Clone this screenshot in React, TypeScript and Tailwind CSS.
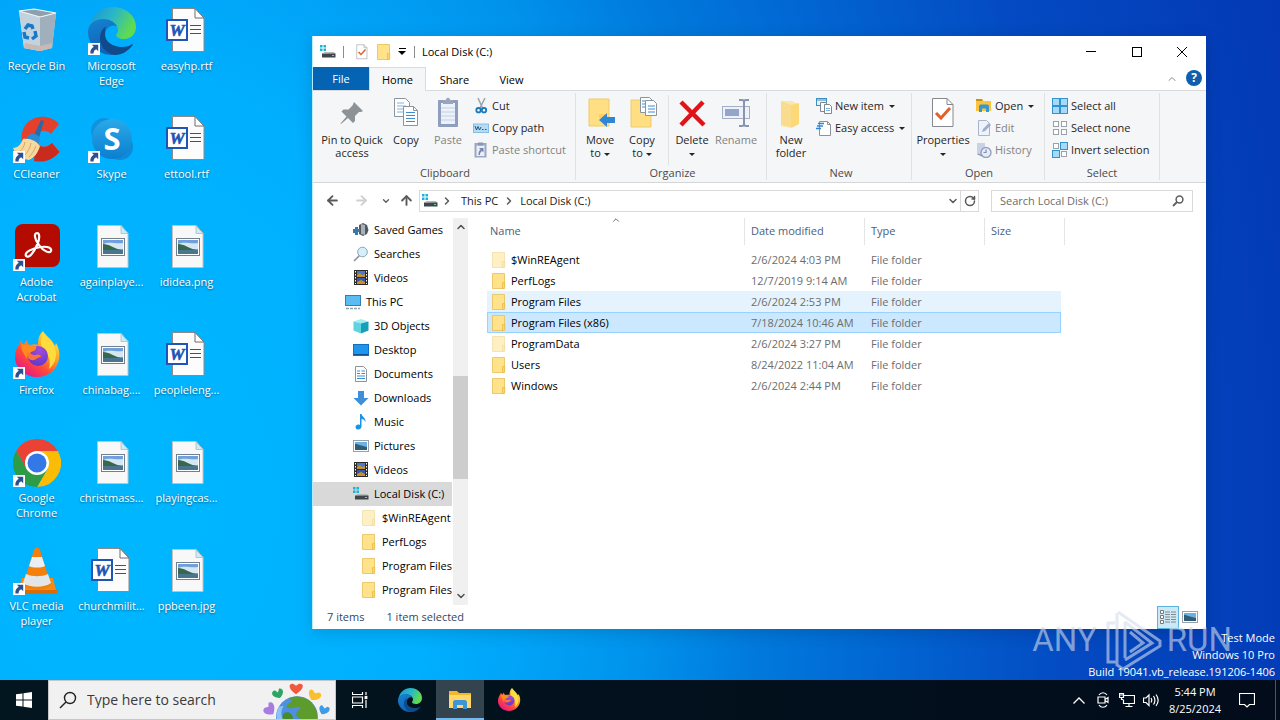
import React, { useState } from "react";
import clsx from "clsx";
import { ArrowLeft, ArrowRight, ArrowUp, ChevronDown, ChevronRight, ChevronUp, RotateCw } from "lucide-react";

type IconProps = { className?: string };

/* ---------- desktop icons ---------- */

const ShortcutArrow = () => (
  <svg viewBox="0 0 12 12" className="absolute bottom-0 left-0 size-3">
    <rect width="12" height="12" fill="#fff" />
    <path d="M3.800 1.800h6.400v6.400L8.200 6.200C6.400 7 5.600 8.200 5.600 10.600H2.400C2 7.400 3.400 5.400 5.800 3.800z" fill="#2d5090" />
  </svg>
);

const RecycleBinIcon = () => (
  <svg viewBox="0 0 48 48" className="size-12">
    <path d="M6 4 21 2 43 6 39 41 27 44 11 41z" fill="#d5dde3" />
    <path d="M6 4 27 10 27 44 11 41z" fill="#c3d3de" />
    <path d="M27 10 43 6 39 41 27 44z" fill="#9fb0bc" />
    <path d="M6 4 21 2 43 6 27 10z" fill="#8fa0ad" stroke="#f2f6f8" strokeWidth="1.200" />
    <path d="M11 41 12 36 27 39 39 36 39 41 27 44z" fill="#c9b8b4" />
    <g fill="none" stroke="#1878c9" strokeWidth="3.400">
      <path d="M12 22l3-4 4 1 1 3" />
      <path d="M22 24l1 5-4 3" />
      <path d="M16 31l-4-1-1-5" />
    </g>
  </svg>
);

const EdgeIcon = ({ className = "size-12" }: IconProps) => (
  <svg viewBox="0 0 48 48" className={className}>
    <defs>
      <linearGradient id="edgeTop" x1="0" y1="0" x2="1" y2="0.400">
        <stop offset="0" stopColor="#1794d8" />
        <stop offset="0.550" stopColor="#2cb8c4" />
        <stop offset="1" stopColor="#5fdb4f" />
      </linearGradient>
      <linearGradient id="edgeLeft" x1="0" y1="0" x2="0.300" y2="1">
        <stop offset="0" stopColor="#1583d1" />
        <stop offset="1" stopColor="#0f63b8" />
      </linearGradient>
    </defs>
    <path d="M1 22C3 8 13 0 25 0c13 0 23 9 23 20 0 7-5 12-12 12-5 0-8-2-8-4 0-1 2-2 2-5 0-5-5-10-13-10C9 13 3 17 1 22z" fill="url(#edgeTop)" />
    <path d="M0 25c0-8 7-13 15-13 7 0 11 3 14 7-6-2-12 2-12 10 0 9 7 15 14 18-3 1-5 1-7 1C10 48 0 37 0 25z" fill="url(#edgeLeft)" />
    <path d="M17 27c0 8 8 13 17 13 5 0 8-1 10-3 1 0 1 1 0 2-4 5-10 9-17 9-9-1-15-9-15-17 0-5 2-9 6-12-1 2-1 5-1 8z" fill="#114a8b" />
  </svg>
);

const WordFileIcon = () => (
  <svg viewBox="0 0 48 48" className="size-12">
    <path d="M9.500 1.500H32l9 9V44.500H9.500z" fill="#fcfcfc" stroke="#8a8a8a" />
    <path d="M32 1.500V11h9z" fill="#fff" stroke="#6d6d6d" />
    <path d="M27 18.500h11M27 22.500h11M27 26.500h11" stroke="#2b579a" strokeWidth="1.200" />
    <rect x="4" y="13" width="20" height="20" fill="#fff" stroke="#1f55b5" strokeWidth="2" />
    <text x="14" y="29" textAnchor="middle" fontFamily="Liberation Serif, serif" fontStyle="italic" fontWeight="700" fontSize="17" fill="#1f55b5" stroke="#1f55b5" strokeWidth="0.600">
      W
    </text>
  </svg>
);

const PictureFileIcon = () => (
  <svg viewBox="0 0 48 48" className="size-12">
    <path d="M9.500 2.500H33l7 8V44.500H9.500z" fill="#f8f8f8" stroke="#c2c2c2" />
    <path d="M33 2.500V10.500h7z" fill="#c9ecfb" stroke="#b7b7b7" strokeWidth="0.800" />
    <rect x="13.500" y="15.500" width="23" height="17" fill="#fff" stroke="#70808f" />
    <rect x="15" y="17" width="20" height="14" fill="#6f9fdc" />
    <path d="M15 21c6-3 12 0 20-1v6H15z" fill="#d5e7f0" />
    <path d="M15 21c6 0 10 4 18 6H15z" fill="#37684c" />
    <path d="M15 27h20v4H15z" fill="#4a7590" />
  </svg>
);

const CCleanerIcon = () => (
  <svg viewBox="0 0 48 48" className="size-12">
    <path d="M46 9C35-3 13 0 9 18c-3 15 8 27 20 27 7 0 13-3 18-8l-8-9c-6 6-15 4-16-3-1-8 8-13 15-6z" fill="#e5402c" />
    <path d="M46 37l-7-9c-6 6-12 5-15 0l-3 18c10 2 19-1 25-9z" fill="#c92c1f" />
    <path d="M28 5l3 1-6 20-6-2z" fill="#2a6aa8" />
    <path d="M14 22c3-5 10-4 13 1l-1 6-13-3z" fill="#2c8bd3" />
    <path d="M10 24c8-1 13 2 17 7-2 7-6 12-11 14C9 44 3 40 0 33c5 0 8-4 10-9z" fill="#f6d9a0" />
    <path d="M12 27c-1 5-3 8-6 10M18 28c-1 6-4 10-7 13M23 31c-2 5-4 8-7 11" stroke="#d9a85f" fill="none" />
  </svg>
);

const SkypeIcon = () => (
  <svg viewBox="0 0 48 48" className="size-12">
    <defs>
      <linearGradient id="skype" x1="0" y1="0" x2="0" y2="1">
        <stop offset="0" stopColor="#2aa9e8" />
        <stop offset="1" stopColor="#0a7fd0" />
      </linearGradient>
    </defs>
    <circle cx="16" cy="16" r="13" fill="#0f93dc" />
    <circle cx="32" cy="32" r="13" fill="#0e8ad6" />
    <circle cx="24" cy="24" r="20" fill="url(#skype)" />
    <text x="24" y="35" textAnchor="middle" fontFamily="Open Sans, sans-serif" fontWeight="700" fontSize="31" fill="#fff">
      S
    </text>
  </svg>
);

const AcrobatIcon = () => (
  <svg viewBox="0 0 48 48" className="size-12">
    <rect x="2" y="1" width="45" height="43" rx="8" fill="#b30b00" />
    <path
      d="M13 33c-2-4 7-8 15-9 7-1 11 1 10 4-1 3-8 0-12-6-5-6-5-12-2-12s3 6 0 12c-3 7-8 14-11 11z"
      fill="none"
      stroke="#fff"
      strokeWidth="2.200"
    />
  </svg>
);

const FirefoxIcon = ({ className = "size-12" }: IconProps) => (
  <svg viewBox="0 0 48 48" className={className}>
    <defs>
      <linearGradient id="foxBody" x1="0.850" y1="0.100" x2="0.200" y2="0.950">
        <stop offset="0" stopColor="#ffe545" />
        <stop offset="0.350" stopColor="#ff9d27" />
        <stop offset="0.650" stopColor="#ff4b37" />
        <stop offset="1" stopColor="#e6158c" />
      </linearGradient>
      <radialGradient id="foxCore" cx="0.600" cy="0.200" r="0.900">
        <stop offset="0" stopColor="#a04be0" />
        <stop offset="1" stopColor="#5a36c8" />
      </radialGradient>
    </defs>
    <path d="M30 0c2 4 9 8 12 15l1-3c3 5 4 10 3 16-2 11-11 18-22 18S2 38 2 26c0-6 2-10 5-14l1-3 2 5 4-5c0 3 1 4 3 5 3-1 6-1 8 0 0-6 1-10 5-14z" fill="url(#foxBody)" />
    <path d="M30 1c2 5 9 8 12 16 3 9-1 17-6 21 2-8 0-14-5-18-4-3-4-12-1-19z" fill="#ffdc3e" />
    <circle cx="25" cy="25" r="10" fill="url(#foxCore)" />
    <path d="M8 13l6 1c3 2 5 2 9 1 1 3-1 5-5 6-1 2-4 2-4 7-3-5-6-9-6-15z" fill="#ff8a1e" />
    <path d="M14 22c4-1 5 3 9 2 3-1 5 0 5 2-4 0-5 4-10 3-3-1-4-4-4-7z" fill="#ff7139" />
  </svg>
);

const ChromeIcon = () => (
  <svg viewBox="0 0 48 48" className="size-12">
    <path d="M3.200 12A24 24 0 0 1 44.800 12H24L13.600 30z" fill="#ea4335" />
    <path d="M44.800 12A24 24 0 0 1 24 48L34.400 30 24 12z" fill="#fbbc05" />
    <path d="M3.200 12A24 24 0 0 0 24 48L34.400 30 H13.600z" fill="#2c9c46" />
    <circle cx="24" cy="24" r="12" fill="#fff" />
    <circle cx="24" cy="24" r="9.500" fill="#3478e8" />
  </svg>
);

const VlcIcon = () => (
  <svg viewBox="0 0 48 48" className="size-12">
    <path d="M9 31h31l4 16H4z" fill="#f58a14" />
    <path d="M4 43h40v4H4z" fill="#d96c05" />
    <path d="M21 3c1-3 5-3 6 0l11 35c-4 6-24 6-28 0z" fill="#f57f0c" />
    <path d="M19 10h10l3 9c-4 2-12 2-16 0z" fill="#eceff1" />
    <path d="M13 27c7 3 15 3 22 0l3 9c-7 5-21 5-28 0z" fill="#e3e6e9" />
  </svg>
);

/* ---------- small icons ---------- */

const FolderIcon = ({ className = "size-4" }: IconProps) => (
  <svg viewBox="0 0 16 16" className={className}>
    <path d="M1.500 0.500h12v13l-1 2h-11z" fill="#ffe28a" stroke="#e6bf55" strokeWidth="0.800" />
    <path d="M11.500 9.500h2.200v6H11.500z" fill="#ffd663" stroke="#e0b23f" strokeWidth="0.600" />
  </svg>
);

const DriveIcon = () => (
  <svg viewBox="0 0 16 16" className="size-4 shrink-0">
    <path d="M0 1h2.500v2.500H0zM3.500 1H6v2.500H3.500zM0 4.500h2.500V7H0zM3.500 4.500H6V7H3.500z" fill="#17b5d8" />
    <path d="M3 9l1.500-1H14l1.500 2z" fill="#b7bbbe" />
    <rect x="2" y="9.500" width="13.500" height="4" fill="#3f454a" />
    <rect x="12" y="11" width="2" height="1" fill="#5ee06a" />
  </svg>
);

const CheckPageIcon = ({ className = "size-4" }: IconProps) => (
  <svg viewBox="0 0 32 32" className={className}>
    <path d="M5.500 1.500H20l6 6V29.500H5.500z" fill="#fff" stroke="#85888c" />
    <path d="M20 1.500v6h6" fill="none" stroke="#85888c" />
    <path d="M9 16l5 5 9-10" fill="none" stroke="#e0622a" strokeWidth="3" />
  </svg>
);

const PinIcon = () => (
  <svg viewBox="0 0 32 32" className="size-8">
    <path d="M18 5l9 9-2 1-2 0-4 4 0 5-2 2-5-5-7 6-0.500-0.500 6-7-5-5 2-2 5 0 4-4z" fill="#8d9296" />
  </svg>
);

const CopyIcon = () => (
  <svg viewBox="0 0 32 32" className="size-8">
    <path d="M4.500 1.500h11l4 4v14h-15z" fill="#fff" stroke="#8c939a" />
    <path d="M7 6h7M7 9h9M7 12h9M7 15h9" stroke="#7eb2e2" />
    <path d="M13.500 9.500h10l4 4v15h-14z" fill="#fff" stroke="#8c939a" />
    <path d="M23.500 9.500v4h4" fill="none" stroke="#8c939a" />
    <path d="M16 15.500h9M16 18.500h9M16 21.500h9M16 24.500h9" stroke="#3d8bd4" />
  </svg>
);

const PasteIcon = () => (
  <svg viewBox="0 0 32 32" className="size-8">
    <rect x="6" y="3" width="20" height="27" rx="1" fill="#8f9dbf" />
    <rect x="9" y="6" width="14" height="21" fill="#edf2fa" />
    <path d="M9 11h14M9 15h14M9 19h14M9 23h14" stroke="#c3cfe5" />
    <path d="M11 3h3c0-3 4-3 4 0h3v4H11z" fill="#9aa5bb" />
  </svg>
);

const CutIcon = () => (
  <svg viewBox="0 0 16 16" className="size-4">
    <path d="M5 0l4.500 10M12 0L7 10" stroke="#9aa4ae" strokeWidth="1.500" />
    <circle cx="5.500" cy="12.200" r="2.200" fill="none" stroke="#1a78b8" strokeWidth="1.800" />
    <circle cx="11" cy="12.200" r="2.200" fill="none" stroke="#1a78b8" strokeWidth="1.800" />
  </svg>
);

const CopyPathIcon = () => (
  <svg viewBox="0 0 16 16" className="size-4">
    <rect x="0.500" y="4" width="15" height="8.500" fill="#b5dbf5" stroke="#87bde3" />
    <path d="M2 6l1.500 4L5 6.500 6.500 10 8 7M9 9.500h1.500M12 9.500h1.500" fill="none" stroke="#24567c" />
  </svg>
);

const PasteShortcutIcon = () => (
  <svg viewBox="0 0 16 16" className="size-4">
    <rect x="1.500" y="1" width="12" height="14.500" fill="#9ba8c4" />
    <rect x="3.500" y="3.500" width="8" height="10.500" fill="#e9eef7" />
    <path d="M5 0.500h5v3H5z" fill="#8997b4" />
    <path d="M6 6h4.500v4.500L9 9c-1.500 1-2 2-2 4H5.500c0-3 0.500-4 2-5.500z" fill="#7787ad" />
  </svg>
);

const MoveToIcon = () => (
  <svg viewBox="0 0 32 32" className="size-8">
    <path d="M5 2h20v27H5z" fill="#ffdf82" stroke="#eccb6c" />
    <path d="M21 17v4h-6V17z" fill="#ffd15c" />
    <path d="M15 23l8-7v4h8v6h-8v4z" fill="#2f86d6" />
  </svg>
);

const CopyToIcon = () => (
  <svg viewBox="0 0 32 32" className="size-8">
    <path d="M5 3h20v27H5z" fill="#ffdf82" stroke="#eccb6c" />
    <path d="M14.500 0.500h9l3 3v12h-12z" fill="#fff" stroke="#8c939a" />
    <path d="M19.500 3.500h8l3 3v12h-11z" fill="#fff" stroke="#8c939a" />
    <path d="M16 4h3M16 7h3M16 10h3M22 9h7M22 12h7M22 15h7" stroke="#3d8bd4" />
  </svg>
);

const DeleteIcon = () => (
  <svg viewBox="0 0 32 32" className="size-8">
    <path d="M5 5l23 23M27 5L5 28" stroke="#e01317" strokeWidth="4.500" />
  </svg>
);

const RenameIcon = () => (
  <svg viewBox="0 0 32 32" className="size-8">
    <rect x="2.500" y="9.500" width="27" height="12" fill="#eef2f8" stroke="#a5b0c6" />
    <rect x="5" y="12" width="14" height="7" fill="#93a5ca" />
    <path d="M19 3h3c1 0 2 1 2 2v22c0 1-1 2-2 2h-3M29 3h-3c-1 0-2 1-2 2v22c0 1 1 2 2 2h3" fill="none" stroke="#8795b2" strokeWidth="2" />
  </svg>
);

const NewFolderIcon = () => (
  <svg viewBox="0 0 32 32" className="size-8">
    <path d="M6 4h11l7 3v20l-8 4-10-2z" fill="#fbe7ac" />
    <path d="M6 4l10 4v22L6 28z" fill="#f9dc8d" />
    <path d="M16 8l8-2v21l-8 4z" fill="#fdd877" />
  </svg>
);

const NewItemIcon = () => (
  <svg viewBox="0 0 16 16" className="size-4">
    <rect x="0.500" y="0.500" width="10" height="7" fill="#e3f1fb" stroke="#3e8fbd" />
    <path d="M1 2h9" stroke="#3e8fbd" />
    <path d="M4.500 4.500h6v9h-6z" fill="#fff" stroke="#7c8791" />
    <path d="M8.500 6.500h5l2 2v7h-7z" fill="#fff" stroke="#7c8791" />
    <path d="M10 10.500h4M10 12.500h4" stroke="#7eb2e2" />
  </svg>
);

const EasyAccessIcon = () => (
  <svg viewBox="0 0 16 16" className="size-4">
    <path d="M3.500 1.500h8l3 3v11h-11z" fill="#fff" stroke="#8c939a" />
    <path d="M11.500 1.500v3h3" fill="none" stroke="#8c939a" />
    <path d="M2 3.500h6M1 6h6M0 8.500h5" stroke="#2f86d6" strokeWidth="1.400" />
  </svg>
);

const OpenIcon = () => (
  <svg viewBox="0 0 16 16" className="size-4">
    <path d="M0 1h6l1 2h8v10H0z" fill="#fcc23b" />
    <path d="M0 1h6l1 2H0z" fill="#c9920f" />
    <path d="M3 14V8.500C3 7 4 6.500 5 6.500h6c1 0 2 0.500 2 2V14h-3v-3.500H6V14z" fill="#3597d4" />
  </svg>
);

const EditIcon = () => (
  <svg viewBox="0 0 16 16" className="size-4">
    <path d="M2.500 0.500h8l3 3v12h-11z" fill="#eef2f9" stroke="#a9b5cf" />
    <path d="M6 12l1-3 6-6 2 2-6 6z" fill="#9fadcc" />
  </svg>
);

const HistoryIcon = () => (
  <svg viewBox="0 0 16 16" className="size-4">
    <path d="M1 1h8v12H1z" fill="#c9d2e6" />
    <circle cx="10" cy="10.500" r="5" fill="#e6ebf5" stroke="#93a3c4" strokeWidth="1.400" />
    <path d="M10 7.500v3H7.500M2 12l4 2" fill="none" stroke="#7f90b5" strokeWidth="1.200" />
  </svg>
);

const SelectIcon = ({ filled }: { filled: boolean[] }) => (
  <svg viewBox="0 0 16 16" className="size-4">
    {filled.map((on, i) => {
      const x = (i % 2) * 8;
      const y = Math.floor(i / 2) * 8;
      return on ? (
        <rect key={i} x={x + 0.5} y={y + 0.5} width="7" height="7" fill="#a6daf8" stroke="#2f93cf" />
      ) : (
        <rect key={i} x={x + 1.5} y={y + 1.5} width="5" height="5" fill="#fff" stroke="#9aa1a8" />
      );
    })}
  </svg>
);

const SavedGamesIcon = () => (
  <svg viewBox="0 0 16 16" className="size-4">
    <path d="M6 3l4-2 4 2 1.500 5L14 12l-4 2-4-2z" fill="#505860" />
    <path d="M8 2l4 1v10l-4-1z" fill="#a9b1b8" />
    <path d="M0 7h2V5h3v2h2v3H5v3H2v-2H0z" fill="#3d78a8" />
  </svg>
);

const SearchesIcon = () => (
  <svg viewBox="0 0 16 16" className="size-4">
    <path d="M6.500 9.500L1 15" stroke="#8a8f95" strokeWidth="1.600" />
    <circle cx="9.500" cy="6" r="4.800" fill="#d7effb" stroke="#8aa5b5" />
  </svg>
);

const VideosIcon = () => (
  <svg viewBox="0 0 16 16" className="size-4">
    <rect x="1" y="0" width="14" height="15" fill="#2b2b2b" />
    <path d="M2.500 1v13M13.500 1v13" stroke="#fff" strokeDasharray="1.500 1.500" />
    <rect x="4" y="1" width="8" height="6" fill="#4d77c9" />
    <rect x="4" y="8" width="8" height="6" fill="#3458b0" />
    <path d="M4 5l3-2 2 2 3-1v3H4zM4 12l4-2 4 2v2H4z" fill="#c9912b" />
  </svg>
);

const ThisPcIcon = () => (
  <svg viewBox="0 0 16 16" className="size-4">
    <rect x="0.500" y="1.500" width="15" height="10" fill="#5bbcf2" stroke="#2e7fb5" />
    <path d="M1 14.500h14" stroke="#8fa3b2" strokeWidth="1.500" strokeDasharray="3 1" />
  </svg>
);

const ObjectsIcon = () => (
  <svg viewBox="0 0 16 16" className="size-4">
    <path d="M0.500 3.500L8 1l7.500 2.500L8 6z" fill="#a5ecf2" />
    <path d="M8 5.500l7.500-2v9L8 15.500z" fill="#16a0b5" />
    <path d="M0.500 3.500l7.500 2v10l-7.500-3z" fill="#5fd3df" />
  </svg>
);

const DesktopIcon = () => (
  <svg viewBox="0 0 16 16" className="size-4">
    <rect x="0.500" y="2.500" width="15" height="11" fill="#1e96ee" stroke="#1270bd" />
    <path d="M1 12.500h14" stroke="#0b548f" />
  </svg>
);

const DocumentsIcon = () => (
  <svg viewBox="0 0 16 16" className="size-4">
    <path d="M2.500 0.500h8l3 3v12h-11z" fill="#fff" stroke="#8c939a" />
    <path d="M4 5h3M8.500 5H12M4 7.500h3M8.500 7.500H12M4 10h8M4 12.500h8" stroke="#3d8bd4" />
  </svg>
);

const DownloadsIcon = () => (
  <svg viewBox="0 0 16 16" className="size-4">
    <path d="M5 1h6v7h4.500L8 15.500 0.500 8H5z" fill="#3e8fdb" />
  </svg>
);

const MusicIcon = () => (
  <svg viewBox="0 0 16 16" className="size-4">
    <path d="M7 0h1.500c0.500 3 4.500 3.500 4 8-1-2-2-3-4-3v7.500c0 4-6 4-6 0.500 0-2 2.500-3 4.500-2z" fill="#1c93ea" />
  </svg>
);

const PicturesIcon = () => (
  <svg viewBox="0 0 16 16" className="size-4 shrink-0">
    <rect x="0.500" y="2.500" width="15" height="11" fill="#fff" stroke="#97a1ab" />
    <rect x="2" y="4" width="12" height="8" fill="#6cb1e6" />
    <path d="M2 6c3 0 6 2 12 3v3H2z" fill="#2f5d74" />
  </svg>
);

/* ---------- desktop ---------- */

const desktopItems = [
  { label: "Recycle Bin", icon: <RecycleBinIcon /> },
  { label: "Microsoft Edge", icon: <EdgeIcon />, shortcut: true },
  { label: "easyhp.rtf", icon: <WordFileIcon /> },
  { label: "CCleaner", icon: <CCleanerIcon />, shortcut: true },
  { label: "Skype", icon: <SkypeIcon />, shortcut: true },
  { label: "ettool.rtf", icon: <WordFileIcon /> },
  { label: "Adobe Acrobat", icon: <AcrobatIcon />, shortcut: true },
  { label: "againplaye...", icon: <PictureFileIcon /> },
  { label: "ididea.png", icon: <PictureFileIcon /> },
  { label: "Firefox", icon: <FirefoxIcon />, shortcut: true },
  { label: "chinabag....", icon: <PictureFileIcon /> },
  { label: "peopleleng...", icon: <WordFileIcon /> },
  { label: "Google Chrome", icon: <ChromeIcon />, shortcut: true },
  { label: "christmass...", icon: <PictureFileIcon /> },
  { label: "playingcas...", icon: <PictureFileIcon /> },
  { label: "VLC media player", icon: <VlcIcon />, shortcut: true },
  { label: "churchmilit...", icon: <WordFileIcon /> },
  { label: "ppbeen.jpg", icon: <PictureFileIcon /> },
];

const DesktopIcons = () => (
  <div className="grid w-[225px] grid-cols-3">
    {desktopItems.map((item) => (
      <button key={item.label} className="flex h-[108px] flex-col items-center pt-[7px] pr-1.5 pl-1">
        <span className="relative">
          {item.icon}
          {item.shortcut && <ShortcutArrow />}
        </span>
        <span className="mt-[3px] leading-[15px] text-white [text-shadow:0_1px_2px_rgba(0,0,0,0.5)]">{item.label}</span>
      </button>
    ))}
  </div>
);

/* ---------- ribbon ---------- */

const Caret = () => <span className="inline-block border-x-[3px] border-t-[3px] border-x-transparent border-t-current align-middle" />;

type BigButtonProps = {
  icon: React.ReactNode;
  lines: React.ReactNode[];
  width: string;
  disabled?: boolean;
};

const BigButton = ({ icon, lines, width, disabled }: BigButtonProps) => (
  <button disabled={disabled} className={clsx("flex shrink-0 flex-col items-center pt-0.5 whitespace-nowrap", width, disabled && "text-[#838383]")}>
    {icon}
    {lines.map((line, i) => (
      <span key={i} className={clsx("leading-[13px]", i === 0 && "mt-1")}>
        {line}
      </span>
    ))}
  </button>
);

type SmallButtonProps = {
  icon: React.ReactNode;
  label: string;
  caret?: boolean;
  disabled?: boolean;
};

const SmallButton = ({ icon, label, caret, disabled }: SmallButtonProps) => (
  <button disabled={disabled} className={clsx("flex h-[22px] items-center gap-[3px] whitespace-nowrap", disabled && "text-[#838383]")}>
    {icon}
    {label}
    {caret && (
      <span className="flex pl-0.5">
        <Caret />
      </span>
    )}
  </button>
);

const RibbonGroup = ({ title, width, children }: { title: string; width: string; children: React.ReactNode }) => (
  <section className={clsx("flex shrink-0 flex-col border-r border-[#e0e1e2]", width)}>
    <div className="flex flex-1 pt-0.5">{children}</div>
    <h2 className="h-[15px] text-center leading-[15px] text-[#4a4a4a]">{title}</h2>
  </section>
);

const Ribbon = () => (
  <div className="flex h-[92px] shrink-0 overflow-hidden border-b border-[#d5d6d8] bg-[#f5f6f7] py-0.5 text-[#262626]">
    <RibbonGroup title="Clipboard" width="w-[263px] pl-0.5">
      <BigButton icon={<PinIcon />} lines={["Pin to Quick", "access"]} width="w-[74px]" />
      <BigButton icon={<CopyIcon />} lines={["Copy"]} width="w-[34px]" />
      <BigButton icon={<PasteIcon />} lines={["Paste"]} width="w-[50px]" disabled />
      <div>
        <SmallButton icon={<CutIcon />} label="Cut" />
        <SmallButton icon={<CopyPathIcon />} label="Copy path" />
        <SmallButton icon={<PasteShortcutIcon />} label="Paste shortcut" disabled />
      </div>
    </RibbonGroup>
    <RibbonGroup title="Organize" width="w-[191px] pl-[3px]">
      <BigButton icon={<MoveToIcon />} lines={["Move", <>to <Caret /></>]} width="w-[42px]" />
      <BigButton icon={<CopyToIcon />} lines={["Copy", <>to <Caret /></>]} width="w-[42px]" />
      <div className="mx-[5px] w-px bg-[#e0e1e2]" />
      <BigButton icon={<DeleteIcon />} lines={["Delete", <Caret />]} width="w-9" />
      <BigButton icon={<RenameIcon />} lines={["Rename"]} width="w-[52px]" disabled />
    </RibbonGroup>
    <RibbonGroup title="New" width="w-[145px] pl-1">
      <BigButton icon={<NewFolderIcon />} lines={["New", "folder"]} width="w-10" />
      <div className="pl-[5px]">
        <SmallButton icon={<NewItemIcon />} label="New item" caret />
        <SmallButton icon={<EasyAccessIcon />} label="Easy access" caret />
      </div>
    </RibbonGroup>
    <RibbonGroup title="Open" width="w-[133px] pl-0.5">
      <BigButton icon={<CheckPageIcon className="size-8" />} lines={["Properties", <Caret />]} width="w-[58px]" />
      <div className="pl-1">
        <SmallButton icon={<OpenIcon />} label="Open" caret />
        <SmallButton icon={<EditIcon />} label="Edit" disabled />
        <SmallButton icon={<HistoryIcon />} label="History" disabled />
      </div>
    </RibbonGroup>
    <RibbonGroup title="Select" width="w-[115px]">
      <div className="pl-[7px]">
        <SmallButton icon={<SelectIcon filled={[true, true, true, true]} />} label="Select all" />
        <SmallButton icon={<SelectIcon filled={[false, false, false, false]} />} label="Select none" />
        <SmallButton icon={<SelectIcon filled={[false, true, true, false]} />} label="Invert selection" />
      </div>
    </RibbonGroup>
  </div>
);

/* ---------- explorer window ---------- */

const TitleBar = () => (
  <header className="flex h-[31px] shrink-0 items-center pr-px">
    <div className="flex items-center pr-[7px] pl-[7px]">
      <DriveIcon />
    </div>
    <div className="h-3 w-px bg-[#8c8c8c]" />
    <button aria-label="Properties" className="ml-2.5">
      <CheckPageIcon />
    </button>
    <button aria-label="New folder" className="ml-1.5">
      <FolderIcon />
    </button>
    <button aria-label="Customize Quick Access Toolbar" className="ml-1.5 flex flex-col items-center gap-0.5">
      <span className="h-px w-[7px] bg-black" />
      <span className="border-x-[4px] border-t-[4px] border-x-transparent border-t-black" />
    </button>
    <div className="ml-2 h-3 w-px bg-[#8c8c8c]" />
    <h1 className="ml-[7px] flex-1">Local Disk (C:)</h1>
    <button aria-label="Minimize" className="flex h-full w-[46px] items-center justify-center">
      <span className="h-px w-2.5 bg-black" />
    </button>
    <button aria-label="Maximize" className="flex h-full w-[45px] items-center justify-center">
      <span className="size-2.5 border border-black" />
    </button>
    <button aria-label="Close" className="flex h-full w-[46px] items-center justify-center">
      <svg viewBox="0 0 10 10" className="size-2.5">
        <path d="M0 0l10 10M10 0L0 10" stroke="#000" />
      </svg>
    </button>
  </header>
);

const TabBar = () => {
  const [tab, setTab] = useState("Home");
  return (
    <nav className="flex h-6 shrink-0 border-b border-[#dadbdc]">
      <button className="w-14 bg-[#0463b2] text-white">File</button>
      {["Home", "Share", "View"].map((name) => (
        <button
          key={name}
          onClick={() => setTab(name)}
          className={clsx("-mb-px w-[57px] border border-b-0", tab === name ? "border-[#dadbdc] bg-[#f5f6f7]" : "border-transparent")}
        >
          {name}
        </button>
      ))}
      <div className="flex-1" />
      <button aria-label="Minimize the Ribbon" className="px-2 text-[#8a8a8a]">
        <ChevronUp className="size-3" />
      </button>
      <button aria-label="Help" className="mr-1 mt-[3px] size-4 rounded-full bg-[#0f5fae] text-[12px] leading-4 font-bold text-white">
        ?
      </button>
    </nav>
  );
};

const AddressBar = () => (
  <div className="flex h-[35px] shrink-0 items-center pr-[13px] text-[#595959]">
    <button aria-label="Back" className="ml-3">
      <ArrowLeft className="size-[15px]" strokeWidth={3} />
    </button>
    <button aria-label="Forward" className="ml-3.5 text-[#cfcfcf]">
      <ArrowRight className="size-[15px]" strokeWidth={3} />
    </button>
    <button aria-label="Recent locations" className="ml-3">
      <ChevronDown className="size-2.5" strokeWidth={3} />
    </button>
    <button aria-label="Up" className="ml-2 mr-[5px]">
      <ArrowUp className="size-[15px]" strokeWidth={3} />
    </button>
    <div className="flex h-[22px] flex-1 items-center border border-[#d9d9d9] pl-0.5 text-[#1a1a1a]">
      <DriveIcon />
      <ChevronRight className="mx-[3px] size-3 text-[#595959]" strokeWidth={3} />
      <button className="ml-[5px]">This PC</button>
      <ChevronRight className="mx-[5px] size-3 text-[#595959]" strokeWidth={3} />
      <button>Local Disk (C:)</button>
      <div className="flex-1" />
      <button aria-label="Previous locations" className="px-px text-[#595959]">
        <ChevronDown className="size-3" strokeWidth={3} />
      </button>
      <button aria-label="Refresh" className="flex h-full w-[18px] items-center justify-center border-l border-[#d9d9d9] text-[#595959]">
        <RotateCw className="size-3" strokeWidth={3} />
      </button>
    </div>
    <label className="ml-3 flex h-[22px] w-[202px] items-center border border-[#d9d9d9] pr-2">
      <input
        aria-label="Search Local Disk (C:)"
        placeholder="Search Local Disk (C:)"
        className="min-w-0 flex-1 pl-2 outline-none placeholder:text-[#6d6d6d]"
      />
      <svg viewBox="0 0 12 12" className="size-3">
        <circle cx="7.500" cy="4.500" r="3.400" fill="none" stroke="#5e5e5e" strokeWidth="1.500" />
        <path d="M5 7L1 11" stroke="#5e5e5e" strokeWidth="1.800" />
      </svg>
    </label>
  </div>
);

const treeItems = [
  { label: "Saved Games", icon: <SavedGamesIcon />, indent: "pl-10" },
  { label: "Searches", icon: <SearchesIcon />, indent: "pl-10" },
  { label: "Videos", icon: <VideosIcon />, indent: "pl-10" },
  { label: "This PC", icon: <ThisPcIcon />, indent: "pl-8" },
  { label: "3D Objects", icon: <ObjectsIcon />, indent: "pl-10" },
  { label: "Desktop", icon: <DesktopIcon />, indent: "pl-10" },
  { label: "Documents", icon: <DocumentsIcon />, indent: "pl-10" },
  { label: "Downloads", icon: <DownloadsIcon />, indent: "pl-10" },
  { label: "Music", icon: <MusicIcon />, indent: "pl-10" },
  { label: "Pictures", icon: <PicturesIcon />, indent: "pl-10" },
  { label: "Videos", icon: <VideosIcon />, indent: "pl-10" },
  { label: "Local Disk (C:)", icon: <DriveIcon />, indent: "pl-10", selected: true },
  { label: "$WinREAgent", icon: <FolderIcon className="size-4 opacity-50" />, indent: "pl-12" },
  { label: "PerfLogs", icon: <FolderIcon />, indent: "pl-12" },
  { label: "Program Files", icon: <FolderIcon />, indent: "pl-12" },
  { label: "Program Files (x86)", icon: <FolderIcon />, indent: "pl-12" },
];

const TreePane = () => (
  <aside className="flex w-[155px] shrink-0">
    <ul className="min-w-0 flex-1 overflow-hidden">
      {treeItems.map((item, i) => (
        <li key={i}>
          <button
            className={clsx("flex h-6 w-full items-center gap-[5px] overflow-hidden whitespace-nowrap", item.indent, item.selected && "bg-[#d9d9d9]")}
          >
            <span className="shrink-0">{item.icon}</span>
            {item.label}
          </button>
        </li>
      ))}
    </ul>
    <div className="ml-px flex w-[15px] flex-col items-center bg-[#f0f0f0] text-[#505050]">
      <ChevronUp className="my-[3px] size-3 shrink-0" strokeWidth={3} />
      <div className="w-full flex-[140]" />
      <div className="w-full flex-[104] bg-[#cdcdcd]" />
      <div className="w-full flex-[108]" />
      <ChevronDown className="my-[3px] size-3 shrink-0" strokeWidth={3} />
    </div>
  </aside>
);

const files = [
  { name: "$WinREAgent", date: "2/6/2024 4:03 PM", hidden: true },
  { name: "PerfLogs", date: "12/7/2019 9:14 AM" },
  { name: "Program Files", date: "2/6/2024 2:53 PM", hover: true },
  { name: "Program Files (x86)", date: "7/18/2024 10:46 AM", selected: true },
  { name: "ProgramData", date: "2/6/2024 3:27 PM", hidden: true },
  { name: "Users", date: "8/24/2022 11:04 AM" },
  { name: "Windows", date: "2/6/2024 2:44 PM" },
];

const FileList = () => (
  <main className="min-w-0 flex-1 overflow-hidden pl-[19px]">
    <table className="w-[578px] table-fixed border-separate border-spacing-0 text-left">
      <colgroup>
        <col className="w-[258px]" />
        <col className="w-[120px]" />
        <col className="w-[120px]" />
        <col className="w-[76px]" />
        <col className="w-1" />
      </colgroup>
      <thead className="text-[#4c607a]">
        <tr className="h-[31px] align-top *:p-0 *:font-normal">
          <th>
            <div className="relative h-[27px] border-r border-[#e5e5e5] pl-[3px] leading-[26px]">
              Name
              <ChevronUp className="absolute top-[-3px] left-1/2 size-2.5 -translate-x-1/2 text-[#505050]" />
            </div>
          </th>
          <th>
            <div className="h-[27px] border-r border-[#e5e5e5] pl-1.5 leading-[26px]">Date modified</div>
          </th>
          <th>
            <div className="h-[27px] border-r border-[#e5e5e5] pl-1.5 leading-[26px]">Type</div>
          </th>
          <th colSpan={2}>
            <div className="h-[27px] border-r border-[#e5e5e5] pl-1.5 leading-[26px]">Size</div>
          </th>
        </tr>
      </thead>
      <tbody>
        {files.map((file) => (
          <tr
            key={file.name}
            className={clsx(
              "h-[21px] text-[#6d6d6d] *:whitespace-nowrap *:p-0",
              file.hover && "*:not-last:bg-[#e5f3ff]",
              file.selected && "*:not-last:bg-[#cce8ff]"
            )}
          >
            <td className={clsx(file.selected && "border-y border-l border-[#99d1ff]")}>
              <div className={clsx("flex items-center gap-1 text-black", file.selected ? "pl-[3px]" : "pl-1")}>
                <FolderIcon className={clsx("size-4", file.hidden && "opacity-50")} />
                {file.name}
              </div>
            </td>
            <td className={clsx("!pl-1.5", file.selected && "border-y border-[#99d1ff]")}>{file.date}</td>
            <td className={clsx("!pl-1.5", file.selected && "border-y border-[#99d1ff]")}>File folder</td>
            <td className={clsx(file.selected && "border-y border-r border-[#99d1ff]")} />
            <td />
          </tr>
        ))}
      </tbody>
    </table>
  </main>
);

const StatusBar = () => (
  <footer className="flex h-6 shrink-0 items-center pl-3.5 pr-[5px] text-[#33475f]">
    <span>7 items</span>
    <span className="ml-[22px] flex-1">1 item selected</span>
    <button aria-label="Details view" className="flex h-[23px] w-[22px] items-center justify-center border border-[#5cb3de] bg-[#cbe8f6]">
      <svg viewBox="0 0 16 14" className="h-3.5 w-4">
        <path d="M0.500 0.500h3v3h-3zM0.500 5.500h3v3h-3zM0.500 10.500h3v3h-3z" fill="#fff" stroke="#777" />
        <path d="M5 2h5M11 2h5M5 4.500h5M11 4.500h5M5 7h5M11 7h5M5 9.500h5M11 9.500h5M5 12h5M11 12h5" stroke="#888" />
      </svg>
    </button>
    <button aria-label="Large icons view" className="flex h-[23px] w-[22px] items-center justify-center">
      <PicturesIcon />
    </button>
  </footer>
);

const ExplorerWindow = () => (
  <div className="absolute top-9 right-[74px] bottom-[51px] left-[312px] flex flex-col border-l border-[#b5ecff] bg-white shadow-[0_4px_16px_rgba(0,0,0,0.15)]">
    <TitleBar />
    <TabBar />
    <Ribbon />
    <AddressBar />
    <div className="flex min-h-0 flex-1">
      <TreePane />
      <FileList />
    </div>
    <StatusBar />
  </div>
);

/* ---------- overlays ---------- */

const Watermark = () => (
  <div className="pointer-events-none absolute right-12 bottom-2 flex items-center gap-1 text-[33px] leading-[60px] text-[#d3dcec]/60 [font-family:Roboto,sans-serif]">
    <span>ANY</span>
    <svg viewBox="0 0 58 64" className="ml-1 h-16 w-[58px]" fill="none" stroke="currentColor" strokeWidth="3">
      <path d="M10 15H3v39h8M13 4l42 29v5L18 61l-6-4V5" />
      <path d="M20 14v36M20 14l27 21-27 17M25 24l13 11-13 9" />
    </svg>
    <span>RUN</span>
  </div>
);

const BuildInfo = () => (
  <div className="pointer-events-none absolute right-[5px] bottom-0 text-right leading-[17px] text-white">
    <p>Test Mode</p>
    <p>Windows 10 Pro</p>
    <p>Build 19041.vb_release.191206-1406</p>
  </div>
);

/* ---------- taskbar ---------- */

const EarthArt = () => (
  <svg viewBox="0 0 76 40" className="h-full w-[76px]">
    <circle cx="38" cy="38" r="22" fill="#4d8fe0" />
    <path d="M30 18c8-4 20-1 25 7 4 5 5 10 4 15H42c-4-2-6-4-4-8 3-2 5-3 2-5-4 0-8 3-13 1 0-4 3-5 6-6z" fill="#5d9b2d" />
    <path d="M24 34c5-3 9 0 10 6H22z" fill="#498a2b" />
    <path d="M19 27c-2 4-3 8-2 13h6c-2-5-2-9 1-14z" fill="#8dc1f5" />
    <path d="M37 14c-9-6-8-12-3-11l3 2 3-2c6-1 6 5-3 11z" fill="#f0593e" />
    <path d="M20 18c-11-1-9-8-5-8l3 2 1-4c5-1 6 5 1 10z" fill="#2ea563" />
    <path d="M53 20c-5-9-1-13 2-10l2 3 4-1c6 2 1 9-8 8z" fill="#fbbf2d" />
    <path d="M13 35c-12 2-12-6-8-7l3-1 0-4c5-3 8 4 5 12z" fill="#a97be0" />
    <path d="M64 35c-5-7-1-11 1-9l2 3 3-2c5 1 2 8-6 8z" fill="#3f9be6" />
  </svg>
);

const Taskbar = () => (
  <footer className="flex h-10 shrink-0 items-stretch bg-linear-to-r from-[#02161f] to-[#020c1b] text-white">
    <button aria-label="Start" className="flex w-12 items-center justify-center">
      <svg viewBox="0 0 16 16" className="size-4">
        <path d="M0 2.300L6.500 1.400V7.500H0zM7.500 1.200L16 0v7.500H7.500zM0 8.500h6.500v6.100L0 13.700zM7.500 8.500H16V16l-8.500-1.200z" fill="#fff" />
      </svg>
    </button>
    <label className="flex w-72 items-center border border-[#c5c8ca] bg-[#f1f1f1] text-[#3a3a3a]">
      <svg viewBox="0 0 18 18" className="ml-2.5 size-[18px]">
        <circle cx="11" cy="7" r="5.500" fill="none" stroke="#222" strokeWidth="1.400" />
        <path d="M7 11L1 17" stroke="#222" strokeWidth="1.400" />
      </svg>
      <input
        aria-label="Type here to search"
        placeholder="Type here to search"
        className="min-w-0 flex-1 pl-2.5 text-[14px] outline-none placeholder:text-[#3a3a3a]"
      />
      <EarthArt />
    </label>
    <button aria-label="Task View" className="flex w-12 items-center justify-center">
      <svg viewBox="0 0 16 16" className="size-4" fill="none" stroke="#fff" strokeWidth="1.200">
        <path d="M0.500 0v2.500h10V0M0.500 16v-2.500h10V16M0.500 5h10v6h-10zM14 0v3M14 8v8" />
        <rect x="13.200" y="4.500" width="1.600" height="2" fill="#fff" />
      </svg>
    </button>
    <button aria-label="Microsoft Edge" className="flex w-[52px] items-center justify-center">
      <EdgeIcon className="size-6" />
    </button>
    <button aria-label="File Explorer" className="flex w-12 items-center justify-center border-b-2 border-[#76b9ed] bg-[#33444f]">
      <svg viewBox="0 0 22 18" className="mt-0.5 h-[18px] w-[22px]">
        <path d="M0 0h8l2 2h12v15H0z" fill="#f5b72a" />
        <path d="M0 4h22v13H0z" fill="#ffd867" />
        <path d="M4 18V11c0-1 1-2 2-2h10c1 0 2 1 2 2v7h-4v-4H8v4z" fill="#3f95d8" />
      </svg>
    </button>
    <button aria-label="Firefox" className="flex w-[50px] items-center justify-center">
      <FirefoxIcon className="size-6" />
    </button>
    <div className="flex-1" />
    <button aria-label="Show hidden icons" className="flex w-6 items-center justify-center">
      <svg viewBox="0 0 12 7" className="h-[7px] w-3">
        <path d="M0.500 6.500L6 1l5.500 5.500" fill="none" stroke="#fff" strokeWidth="1.300" />
      </svg>
    </button>
    <button aria-label="Meet Now" className="flex w-6 items-center justify-center">
      <svg viewBox="0 0 12 16" className="h-4 w-3" fill="none" stroke="#fff" strokeWidth="1.200">
        <path d="M2 3c2-3 6-3 8 0M2 13c2 3 6 3 8 0M1 5h7v6H1zM8 7.500l3-2v5l-3-2" />
      </svg>
    </button>
    <button aria-label="Network" className="flex w-6 items-center justify-center">
      <svg viewBox="0 0 16 16" className="size-4" fill="none" stroke="#fff" strokeWidth="1.200">
        <path d="M5 3.500h10.500v8H4.500V8M10 11.500v3M6.500 14.500h7M0.500 1.500h4v4h-4zM2.500 5.500v2h2M1 3h3" />
      </svg>
    </button>
    <button aria-label="Volume" className="flex w-6 items-center justify-center">
      <svg viewBox="0 0 16 16" className="size-4" fill="none" stroke="#fff" strokeWidth="1.200">
        <path d="M0.500 6h2.500l3-3v10.500L3 10.500H0.500zM8 6c1 1.500 1 3 0 4.500M10.500 4c2 3 2 5.500 0 8.500M13 2.500c3 4 3 7.500 0 11.500" />
      </svg>
    </button>
    <button className="flex w-16 flex-col items-center justify-center leading-[17px]">
      <span>5:44 PM</span>
      <span>8/25/2024</span>
    </button>
    <button aria-label="Notifications" className="flex w-10 items-center justify-center">
      <svg viewBox="0 0 16 16" className="size-4" fill="none" stroke="#fff" strokeWidth="1.200">
        <path d="M0.500 1.500h15v11h-5L8 15l-2.500-2.500h-5z" />
      </svg>
    </button>
    <button aria-label="Show desktop" className="ml-2 w-[5px] border-l border-[#4b5563]" />
  </footer>
);

const App = () => {
  return (
    <div className="flex h-screen flex-col overflow-hidden text-[11px] leading-4 text-black [font-family:'Open_Sans','Noto_Sans',sans-serif] select-none">
      <div className="relative min-h-0 flex-1 bg-[radial-gradient(ellipse_95%_250%_at_10%_75%,#00b7ff_0%,#00b0ff_25%,#00a4f8_33%,#0092ec_43%,#007add_52%,#044ac2_78%,#0338b4_100%)]">
        <DesktopIcons />
        <ExplorerWindow />
        <Watermark />
        <BuildInfo />
      </div>
      <Taskbar />
    </div>
  );
};

export default App;
